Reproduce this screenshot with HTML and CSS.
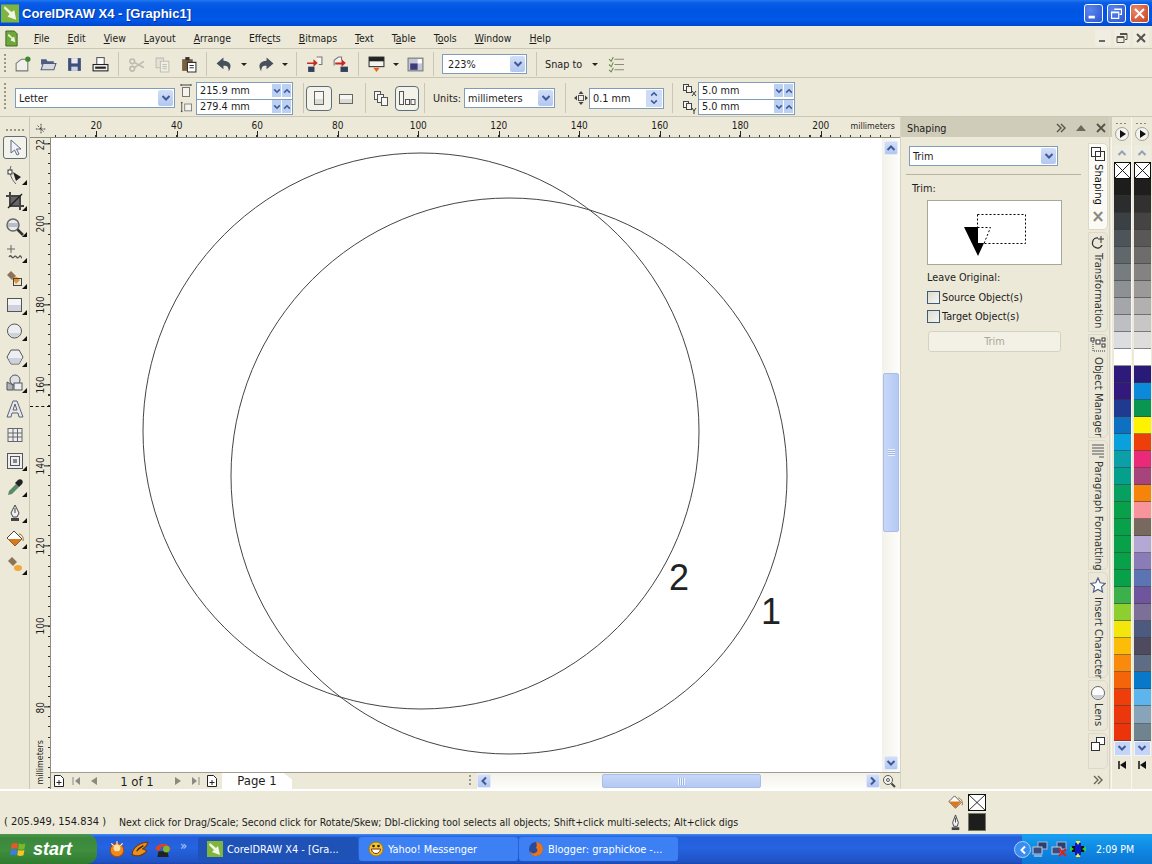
FILE: index.html
```html
<!DOCTYPE html>
<html lang="en">
<head>
    <meta charset="utf-8">
    <title>CorelDRAW X4 - [Graphic1]</title>
    <link rel="stylesheet" href="styles.css">
</head>
<body>
    <svg class="defs" width="0" height="0">
        <symbol id="chev-d" viewBox="0 0 10 10"><path d="M1.5 3 5 6.5 8.5 3" fill="none" stroke="#3d5a96" stroke-width="2"/></symbol>
        <symbol id="chev-u" viewBox="0 0 10 10"><path d="M1.5 7 5 3.5 8.5 7" fill="none" stroke="#3d5a96" stroke-width="2"/></symbol>
        <symbol id="chev-l" viewBox="0 0 10 10"><path d="M7 1.5 3.5 5 7 8.5" fill="none" stroke="#3d5a96" stroke-width="2"/></symbol>
        <symbol id="chev-r" viewBox="0 0 10 10"><path d="M3 1.5 6.5 5 3 8.5" fill="none" stroke="#3d5a96" stroke-width="2"/></symbol>
        <symbol id="add-page" viewBox="0 0 12 14"><path d="M1.5 1.5h6l3 3v8h-9z" fill="#fff" stroke="#222"/><path d="M6 6v5M3.5 8.500h5" stroke="#222"/></symbol>
    </svg>

    <header class="titlebar">
        <svg class="title-logo" viewBox="0 0 20 20"><rect width="19" height="19" y="1" fill="#7fb53c"/><path d="M4 3 11 9l3-2 2 10-9-3 2-3-6-6z" fill="#f3f6e6"/></svg>
        <span class="title-text">CorelDRAW X4 - [Graphic1]</span>
        <div class="win-buttons">
            <button class="win-btn"><svg viewBox="0 0 19 19"><rect x="4" y="12" width="7" height="3" fill="#fff"/></svg></button>
            <button class="win-btn"><svg viewBox="0 0 19 19"><path d="M7 4.500h8v6h-2M4 8h8v7H4z M4 8.500h8M7 5h8" fill="none" stroke="#fff" stroke-width="1.300"/></svg></button>
            <button class="win-btn win-close"><svg viewBox="0 0 19 19"><path d="M4.500 4.500l10 10M14.500 4.500l-10 10" stroke="#fff" stroke-width="2.200"/></svg></button>
        </div>
    </header>

    <nav class="menubar">
        <svg class="menu-logo" viewBox="0 0 16 18"><path d="M2 1h9l3 3v13H2z" fill="#6fa83a" stroke="#3d6a1f"/><path d="M5 4l4 4 2-1 1 6-5-2 1-2-4-3z" fill="#eef3dc"/></svg>
        <span class="menu-item"><u>F</u>ile</span>
        <span class="menu-item"><u>E</u>dit</span>
        <span class="menu-item"><u>V</u>iew</span>
        <span class="menu-item"><u>L</u>ayout</span>
        <span class="menu-item"><u>A</u>rrange</span>
        <span class="menu-item">Effe<u>c</u>ts</span>
        <span class="menu-item"><u>B</u>itmaps</span>
        <span class="menu-item"><u>T</u>ext</span>
        <span class="menu-item">T<u>a</u>ble</span>
        <span class="menu-item">T<u>o</u>ols</span>
        <span class="menu-item"><u>W</u>indow</span>
        <span class="menu-item"><u>H</u>elp</span>
        <div class="mdi-buttons">
            <svg viewBox="0 0 16 16"><rect x="4" y="10" width="6" height="2" fill="#6b6a60"/></svg>
            <svg viewBox="0 0 16 16"><path d="M6 3.500h7v6h-2M3 6.500h7v6H3zM3 7.500h7M6 4.500h7" fill="none" stroke="#55544a"/></svg>
            <svg viewBox="0 0 16 16"><path d="M4 4l8 8M12 4l-8 8" stroke="#55544a" stroke-width="2"/></svg>
        </div>
    </nav>

    <div class="toolbar">
        <span class="grip"></span>
        <button class="tb-btn"><svg viewBox="0 0 16 16"><path d="M2 7l5-4h6v11H2z" fill="#f1f0ea" stroke="#777"/><circle cx="13" cy="3" r="2.500" fill="#3b8a2c"/></svg></button>
        <button class="tb-btn"><svg viewBox="0 0 16 16"><path d="M1 3h5l1 2h6v3H1z" fill="#4c5f80"/><path d="M1 13 3 7h12l-2 6z" fill="#d9dbe0" stroke="#4c5f80"/></svg></button>
        <button class="tb-btn"><svg viewBox="0 0 16 16"><path d="M2 2h12v12H2z" fill="#3d4f7c"/><rect x="5" y="2" width="6" height="5" fill="#e8e8ee"/><rect x="5" y="10" width="6" height="4" fill="#cfd3e0"/></svg></button>
        <button class="tb-btn"><svg viewBox="0 0 16 16"><rect x="4.500" y="1.500" width="7" height="7" fill="#fff" stroke="#555"/><rect x="1" y="8" width="14" height="6" fill="#efeee8" stroke="#222"/><rect x="3" y="10" width="10" height="2" fill="#222"/></svg></button>
        <span class="sep"></span>
        <button class="tb-btn"><svg viewBox="0 0 16 16"><circle cx="4" cy="12" r="2.200" fill="none" stroke="#bdbbaf" stroke-width="1.500"/><circle cx="4" cy="5" r="2.200" fill="none" stroke="#bdbbaf" stroke-width="1.500"/><path d="M6 6l9 5M6 11l9-6" stroke="#bdbbaf" stroke-width="1.500"/></svg></button>
        <button class="tb-btn"><svg viewBox="0 0 16 16"><path d="M2 2h7v9H2z" fill="#e4e2d6" stroke="#c2c0b4"/><path d="M6 5h8v10H6z" fill="#efeee6" stroke="#c2c0b4"/><path d="M8 8h4M8 10h4M8 12h4" stroke="#c2c0b4"/></svg></button>
        <button class="tb-btn"><svg viewBox="0 0 16 16"><path d="M2 3h10v11H2z" fill="#7a5f3f"/><rect x="5" y="1" width="4" height="3" fill="#333"/><path d="M7 6h8v9H7z" fill="#fff" stroke="#333"/><path d="M9 9h4M9 11h4" stroke="#333"/></svg></button>
        <span class="sep"></span>
        <button class="tb-btn"><svg viewBox="0 0 16 16"><path d="M7 1.500 0.500 7 7 12.500V9.200c3.500-.5 5 1 5 5.300 3.500-5.500 1.500-9.800-5-10z" fill="#47515e"/></svg></button>
        <button class="tb-drop"></button>
        <button class="tb-btn"><svg viewBox="0 0 16 16"><path d="M9 1.500 15.500 7 9 12.500V9.200c-3.500-.5-5 1-5 5.300C.5 9 2.500 4.700 9 4.500z" fill="#47515e"/></svg></button>
        <button class="tb-drop"></button>
        <span class="sep"></span>
        <button class="tb-btn"><svg viewBox="0 0 16 16"><path d="M10 1h5v7h-3" fill="#f4f3ee" stroke="#777"/><path d="M3 8h6V5l4 3.500L9 12V9.500H3z" fill="#c8281e" transform="translate(-2 -2)"/><rect x="2" y="10" width="6" height="5" fill="#33405c"/></svg></button>
        <button class="tb-btn"><svg viewBox="0 0 16 16"><path d="M2 9V4l4-3h3v3" fill="#f4f3ee" stroke="#777"/><path d="M3 6h6V3l4 3.500L9 10V8H3z" fill="#c8281e"/><rect x="8" y="10" width="7" height="5" fill="#33405c"/></svg></button>
        <span class="sep"></span>
        <button class="tb-btn"><svg viewBox="0 0 16 16"><rect x="1" y="1" width="14" height="9" fill="#f4f3ee" stroke="#333"/><rect x="1" y="1" width="14" height="4" fill="#222"/><path d="M5 11h6l-3 4z" fill="#e8641c"/></svg></button>
        <button class="tb-drop"></button>
        <button class="tb-btn tb-launch"><svg viewBox="0 0 16 16"><rect x="1" y="2" width="14" height="12" fill="#c3c6d6" stroke="#777"/><rect x="3" y="7" width="7" height="6" fill="#3d3d7c"/><rect x="10" y="3" width="4" height="4" fill="#fff"/></svg></button>
        <span class="sep"></span>
        <div class="combo combo-zoom"><span class="combo-value">223%</span><span class="drop"><svg><use href="#chev-d"/></svg></span></div>
        <span class="sep sep-wide"></span>
        <span class="label label-snap">Snap to</span>
        <button class="tb-drop tb-drop-snap"></button>
        <button class="tb-btn tb-options"><svg viewBox="0 0 16 16"><path d="M6 3h9M6 8h9M6 13h9" stroke="#8a8c74"/><path d="M1 3l2 2 2-4M1 8l2 2 2-4M1 13l2 2 2-4" fill="none" stroke="#6d8a50"/></svg></button>
    </div>

    <div class="propbar">
        <span class="grip"></span>
        <div class="combo combo-page"><span class="combo-value">Letter</span><span class="drop"><svg><use href="#chev-d"/></svg></span></div>
        <div class="size-icons">
            <svg viewBox="0 0 12 14"><path d="M1 1v2M11 1v2M1 2h10" stroke="#444"/><rect x="2.500" y="4.500" width="7" height="9" fill="#f4f3ee" stroke="#777"/></svg>
            <svg viewBox="0 0 14 14"><path d="M2 1v12M1 2h2M1 12h2" stroke="#444"/><rect x="5.500" y="3.500" width="8" height="8" fill="#f4f3ee" stroke="#777"/></svg>
        </div>
        <div class="spin-pair spin-size">
            <div class="spin-row"><span class="spin-value">215.9 mm</span><span class="spin-btn"><svg><use href="#chev-d"/></svg></span><span class="spin-btn"><svg><use href="#chev-u"/></svg></span></div>
            <div class="spin-row"><span class="spin-value">279.4 mm</span><span class="spin-btn"><svg><use href="#chev-d"/></svg></span><span class="spin-btn"><svg><use href="#chev-u"/></svg></span></div>
        </div>
        <span class="sep sep-tall"></span>
        <button class="pb-btn pb-on"><svg viewBox="0 0 18 18"><rect x="4.500" y="2.500" width="9" height="13" fill="#f6f6f2" stroke="#666"/><rect x="5" y="10" width="8" height="5" fill="#dcdcd6"/></svg></button>
        <button class="pb-btn"><svg viewBox="0 0 18 18"><rect x="2.500" y="5.500" width="13" height="9" fill="#f6f6f2" stroke="#666"/><rect x="3" y="10" width="12" height="4" fill="#dcdcd6"/></svg></button>
        <span class="sep sep-tall"></span>
        <button class="pb-btn"><svg viewBox="0 0 18 18"><rect x="2.500" y="2.500" width="6" height="8" fill="#f6f6f2" stroke="#555"/><rect x="5.500" y="5.500" width="6" height="8" fill="#f6f6f2" stroke="#555"/><rect x="9.500" y="8.500" width="6" height="8" fill="#f6f6f2" stroke="#555"/></svg></button>
        <button class="pb-btn pb-on pb-tight"><svg viewBox="0 0 18 18"><rect x="1.500" y="2.500" width="4" height="13" fill="#f6f6f2" stroke="#555"/><rect x="7.500" y="10.500" width="4" height="5" fill="#f6f6f2" stroke="#555"/><rect x="13" y="10.500" width="4" height="5" fill="#f6f6f2" stroke="#555"/></svg></button>
        <span class="sep sep-tall"></span>
        <span class="label label-units">Units:</span>
        <div class="combo combo-units"><span class="combo-value">millimeters</span><span class="drop"><svg><use href="#chev-d"/></svg></span></div>
        <span class="sep sep-tall"></span>
        <svg class="nudge-icon" viewBox="0 0 14 14"><rect x="4.500" y="4.500" width="5" height="5" fill="#eee" stroke="#555"/><path d="M7 0l2.500 3h-5zM7 14l2.500-3h-5zM0 7l3-2.500v5zM14 7l-3-2.500v5z" fill="#444"/></svg>
        <div class="spin-single"><span class="spin-value">0.1 mm</span><span class="spin-stack"><svg><use href="#chev-u"/></svg><svg><use href="#chev-d"/></svg></span></div>
        <span class="sep sep-tall"></span>
        <div class="size-icons size-icons-dup">
            <svg viewBox="0 0 16 14"><rect x="1.500" y="1.500" width="5" height="6" fill="#f4f3ee" stroke="#444"/><rect x="4.500" y="3.500" width="5" height="6" fill="#f4f3ee" stroke="#444"/><path d="M10 8l4 5M14 8l-4 5" stroke="#333"/></svg>
            <svg viewBox="0 0 16 14"><rect x="1.500" y="1.500" width="5" height="6" fill="#f4f3ee" stroke="#444"/><rect x="4.500" y="3.500" width="5" height="6" fill="#f4f3ee" stroke="#444"/><path d="M10 8l2 3 2-3M12 11v3" fill="none" stroke="#333"/></svg>
        </div>
        <div class="spin-pair spin-dup">
            <div class="spin-row"><span class="spin-value">5.0 mm</span><span class="spin-btn"><svg><use href="#chev-d"/></svg></span><span class="spin-btn"><svg><use href="#chev-u"/></svg></span></div>
            <div class="spin-row"><span class="spin-value">5.0 mm</span><span class="spin-btn"><svg><use href="#chev-d"/></svg></span><span class="spin-btn"><svg><use href="#chev-u"/></svg></span></div>
        </div>
    </div>

    <main class="workspace">
        <aside class="toolbox">
            <span class="grip-h"></span>
            <button class="tool tool-on"><svg viewBox="0 0 20 20"><path d="M6 2v13l3.500-3 2.500 5 2-1-2.500-5H16z" fill="#f2f3f7" stroke="#5a6a8c"/></svg></button>
            <button class="tool more"><svg viewBox="0 0 20 20"><path d="M6 1c-2 5-1 12 5 18" fill="none" stroke="#666"/><rect x="3" y="5" width="4" height="4" fill="#fff" stroke="#333"/><path d="M8 7l8 5-5 4z" fill="#222"/></svg></button>
            <button class="tool more"><svg viewBox="0 0 20 20"><path d="M5 1v14h14M1 5h14v14" fill="none" stroke="#444" stroke-width="2"/><rect x="6" y="6" width="8" height="8" fill="#666"/><path d="M3 17 17 3" stroke="#222" stroke-width="1.500"/></svg></button>
            <button class="tool more"><svg viewBox="0 0 20 20"><circle cx="8" cy="8" r="6" fill="#e9ebf0" stroke="#666" stroke-width="1.500"/><path d="M3 8h10" stroke="#b8bcc6" stroke-width="4"/><path d="M12.500 12.500 18 18" stroke="#333" stroke-width="2.500"/></svg></button>
            <button class="tool more"><svg viewBox="0 0 20 20"><path d="M6 2v8M2 6h8" stroke="#666"/><path d="M4 14c2-4 3 3 5 0s3 3 5 0 2 1 3 1" fill="none" stroke="#555" stroke-width="1.300"/></svg></button>
            <button class="tool more"><svg viewBox="0 0 20 20"><path d="M2 6l4-4 5 5-4 4z" fill="#8a7356"/><path d="M7 9l5-1 3 3-4 4z" fill="#e8912c"/><rect x="8.500" y="9.500" width="8" height="7" fill="none" stroke="#444"/></svg></button>
            <button class="tool more"><svg viewBox="0 0 20 20"><rect x="2.500" y="3.500" width="14" height="13" fill="#f4f4f6" stroke="#555"/><rect x="3" y="10" width="13" height="6" fill="#cfd2dc"/></svg></button>
            <button class="tool more"><svg viewBox="0 0 20 20"><circle cx="9.500" cy="10" r="7" fill="#eceef2" stroke="#555"/><path d="M3.500 12a6.500 6.500 0 0 0 12 0z" fill="#cfd2dc"/></svg></button>
            <button class="tool more"><svg viewBox="0 0 20 20"><path d="M6 3h8l4 7-4 7H6l-4-7z" fill="#eceef2" stroke="#555"/><path d="M3 11h14l-3 5.500H6z" fill="#cfd2dc"/></svg></button>
            <button class="tool more"><svg viewBox="0 0 20 20"><circle cx="10" cy="7" r="5" fill="#dfe1e8" stroke="#555"/><path d="M2 17V9l6 3v5z" fill="#aeb2bf" stroke="#555"/><rect x="9" y="10" width="8" height="7" fill="#eceef2" stroke="#555"/></svg></button>
            <button class="tool"><svg viewBox="0 0 20 20"><path d="M8 2h4l6 16h-4l-1-4H7l-1 4H2zM8 11h4l-2-6z" fill="#e6e8ee" stroke="#5c6272" fill-rule="evenodd"/></svg></button>
            <button class="tool"><svg viewBox="0 0 20 20"><rect x="3" y="3.500" width="14" height="13" fill="#eceef2" stroke="#666"/><path d="M3 8h14M3 12h14M8 4v12M12.500 4v12" stroke="#666"/></svg></button>
            <button class="tool more"><svg viewBox="0 0 20 20"><rect x="2.500" y="2.500" width="15" height="15" fill="#eceef2" stroke="#555"/><rect x="5.500" y="5.500" width="9" height="9" fill="none" stroke="#555"/><rect x="8" y="8" width="4" height="4" fill="#888"/></svg></button>
            <button class="tool more"><svg viewBox="0 0 20 20"><path d="M3 18l1-4 7-7 3 3-7 7z" fill="#5a8a6a"/><path d="M10 6l3-3c1-1 3-1 4 0s1 3 0 4l-3 3z" fill="#222"/></svg></button>
            <button class="tool more"><svg viewBox="0 0 20 20"><path d="M10 2l4 8-2 4H8l-2-4z" fill="#eef0f3" stroke="#444"/><path d="M10 5v5" stroke="#444"/><rect x="6" y="15" width="8" height="3" fill="#444"/></svg></button>
            <button class="tool more"><svg viewBox="0 0 20 20"><path d="M9 2l8 8-7 7-8-8z" fill="#fff" stroke="#444"/><path d="M3 10h14l-7 7z" fill="#d8791c"/><path d="M14 5c3 0 5 4 4 7" fill="none" stroke="#9a6a30"/></svg></button>
            <button class="tool more"><svg viewBox="0 0 20 20"><path d="M3 6l4-4 5 5-4 4z" fill="#8a7356"/><ellipse cx="13" cy="13" rx="4" ry="3" fill="#f0a83c"/></svg></button>
        </aside>

        <section class="drawing">
            <div class="ruler-row">
                <div class="ruler-corner"><svg viewBox="0 0 14 14"><path d="M7 1v12M1 7h12" stroke="#222" stroke-dasharray="2 1"/><path d="M3 3l8 8" stroke="#222" stroke-dasharray="2 2"/></svg></div>
                <div class="ruler-h">
                    <span class="mark">20</span><span class="mark">40</span><span class="mark">60</span><span class="mark">80</span><span class="mark">100</span><span class="mark">120</span><span class="mark">140</span><span class="mark">160</span><span class="mark">180</span><span class="mark">200</span>
                    <span class="ruler-unit">millimeters</span>
                </div>
            </div>
            <div class="drawing-body">
                <div class="ruler-v">
                    <span class="mark-v mark-first">22</span><span class="mark-v">200</span><span class="mark-v">180</span><span class="mark-v">160</span><span class="mark-v">140</span><span class="mark-v">120</span><span class="mark-v">100</span><span class="mark-v">80</span>
                    <span class="ruler-unit-v">millimeters</span>
                    <span class="cursor-v"></span>
                </div>
                <div class="drawing-main">
                    <div class="canvas-row">
                        <div class="canvas">
                            <svg class="art" viewBox="0 0 831 633">
                                <circle cx="370" cy="293" r="278" fill="none" stroke="#444"/>
                                <circle cx="458" cy="338" r="278" fill="none" stroke="#444"/>
                                <text x="628" y="452" class="art-num">2</text>
                                <text x="720" y="486" class="art-num">1</text>
                            </svg>
                        </div>
                        <div class="vscroll">
                            <span class="sb-btn"><svg><use href="#chev-u"/></svg></span>
                            <span class="vtrack"><span class="vthumb"></span></span>
                            <span class="sb-btn"><svg><use href="#chev-d"/></svg></span>
                        </div>
                    </div>
                    <div class="page-row">
                        <div class="pager">
                            <svg class="pg-add" viewBox="0 0 12 14"><use href="#add-page"/></svg>
                            <svg class="pg-nav" viewBox="0 0 10 10"><path d="M2 1v8" stroke="#8a8a80"/><path d="M9 1v8L4 5z" fill="#8a8a80"/></svg>
                            <svg class="pg-nav" viewBox="0 0 10 10"><path d="M8 1v8L2 5z" fill="#8a8a80"/></svg>
                            <span class="page-count">1 of 1</span>
                            <svg class="pg-nav" viewBox="0 0 10 10"><path d="M2 1v8l6-4z" fill="#8a8a80"/></svg>
                            <svg class="pg-nav" viewBox="0 0 10 10"><path d="M8 1v8" stroke="#8a8a80"/><path d="M1 1v8l5-4z" fill="#8a8a80"/></svg>
                            <svg class="pg-add" viewBox="0 0 12 14"><use href="#add-page"/></svg>
                            <span class="page-tab">Page 1</span>
                        </div>
                        <span class="page-fill"><span class="grip-small"></span></span>
                        <div class="hscroll">
                            <span class="sb-btn"><svg><use href="#chev-l"/></svg></span>
                            <span class="htrack"><span class="hthumb"></span></span>
                            <span class="sb-btn"><svg><use href="#chev-r"/></svg></span>
                        </div>
                        <svg class="zoom-corner" viewBox="0 0 14 14"><circle cx="6" cy="6" r="4.500" fill="#f4f4f0" stroke="#555"/><circle cx="6" cy="6" r="1.500" fill="none" stroke="#555"/><path d="M9.500 9.500 13 13" stroke="#444" stroke-width="2"/></svg>
                    </div>
                </div>
            </div>
        </section>

        <aside class="docker">
            <div class="docker-head">
                <span>Shaping</span>
                <svg viewBox="0 0 12 12" class="dh-icon"><path d="M2 2l4 4-4 4M6 2l4 4-4 4" fill="none" stroke="#55544a" stroke-width="1.400"/></svg>
                <svg viewBox="0 0 12 12" class="dh-icon"><path d="M1 9 6 3l5 6z" fill="#6a695e"/></svg>
                <svg viewBox="0 0 12 12" class="dh-icon"><path d="M2 2l8 8M10 2l-8 8" stroke="#55544a" stroke-width="1.800"/></svg>
            </div>
            <div class="combo combo-op"><span class="combo-value">Trim</span><span class="drop"><svg><use href="#chev-d"/></svg></span></div>
            <hr class="docker-rule">
            <p class="docker-title">Trim:</p>
            <div class="preview">
                <svg viewBox="0 0 133 63" width="133" height="63">
                    <rect x="49.500" y="13.500" width="48" height="29" fill="none" stroke="#000" stroke-dasharray="2 2"/>
                    <path d="M49.500 26.500h13l-6.500 16" fill="none" stroke="#000" stroke-dasharray="2 2"/>
                    <path d="M36 26h14v16h6l-6 13z" fill="#000"/>
                </svg>
            </div>
            <p class="docker-label">Leave Original:</p>
            <label class="check"><span class="box"></span>Source Object(s)</label>
            <label class="check"><span class="box"></span>Target Object(s)</label>
            <button class="apply-btn">Trim</button>
        </aside>

        <aside class="docker-tabs">
            <div class="dtab dtab-on dtab-shaping">
                <svg viewBox="0 0 16 16"><rect x="1.500" y="1.500" width="9" height="9" fill="#fff" stroke="#333"/><rect x="5.500" y="5.500" width="9" height="9" fill="none" stroke="#333"/></svg>
                <span class="dtab-text">Shaping</span>
                <span class="dtab-close">&#215;</span>
            </div>
            <div class="dtab dtab-transform">
                <svg viewBox="0 0 16 16"><path d="M8 3a5 5 0 1 0 4 7" fill="none" stroke="#333" stroke-width="1.300"/><path d="M11 1v7M8 4h6" stroke="#333"/></svg>
                <span class="dtab-text">Transformation</span>
            </div>
            <div class="dtab dtab-object">
                <svg viewBox="0 0 16 16"><rect x="1" y="1" width="3" height="3" fill="#fff" stroke="#333"/><rect x="6" y="3" width="4" height="4" fill="#fff" stroke="#333"/><rect x="12" y="1" width="3" height="3" fill="#fff" stroke="#333"/><rect x="12" y="7" width="3" height="3" fill="#fff" stroke="#333"/><path d="M3 5v9h12" fill="none" stroke="#333" stroke-dasharray="1 1"/></svg>
                <span class="dtab-text">Object Manager</span>
            </div>
            <div class="dtab dtab-para">
                <svg viewBox="0 0 16 16"><path d="M2 2h12M2 5h12M2 8h12M2 11h12M9 14h5" stroke="#555"/></svg>
                <span class="dtab-text">Paragraph Formatting</span>
            </div>
            <div class="dtab dtab-char">
                <svg viewBox="0 0 16 16"><path d="M8 1l2.200 4.800 5 .6-3.700 3.500 1 5.100L8 12.500 3.500 15l1-5.100L.8 6.400l5-.6z" fill="#fff" stroke="#4d5d86" stroke-width="1.200"/></svg>
                <span class="dtab-text">Insert Character</span>
            </div>
            <div class="dtab dtab-lens">
                <svg viewBox="0 0 16 16"><circle cx="8" cy="8" r="6.500" fill="#fff" stroke="#666"/><path d="M2.500 10a6 6 0 0 0 11 0z" fill="#cdd0d8"/></svg>
                <span class="dtab-text">Lens</span>
            </div>
            <div class="dtab dtab-clone">
                <svg viewBox="0 0 16 16"><rect x="6.500" y="1.500" width="8" height="7" fill="#fff" stroke="#333"/><rect x="1.500" y="6.500" width="8" height="8" fill="#fff" stroke="#333"/></svg>
            </div>
            <svg class="dtab-more" viewBox="0 0 12 12"><path d="M2 2l4 4-4 4M6 2l4 4-4 4" fill="none" stroke="#66655a" stroke-width="1.400"/></svg>
        </aside>

        <aside class="palettes">
            <div class="palette">
                <span class="pal-grip"></span>
                <span class="pal-play"></span>
                <span class="pal-up"><svg><use href="#chev-u"/></svg></span>
                <span class="swatch-none"><svg viewBox="0 0 16 16"><path d="M0 0l16 16M16 0 0 16" stroke="#111"/></svg></span>
                <div class="swatches">
                    <i style="background:#1d1d1b"></i><i style="background:#2a2c2e"></i><i style="background:#3b4045"></i><i style="background:#4e555a"></i><i style="background:#61686c"></i><i style="background:#777c7f"></i><i style="background:#8e9194"></i><i style="background:#a4a6a9"></i><i style="background:#bdbfc2"></i><i style="background:#dcdde0"></i><i style="background:#ffffff"></i>
                    <i style="background:#2e1a7a"></i><i style="background:#32197c"></i><i style="background:#1f3a8f"></i><i style="background:#0d70c0"></i><i style="background:#09a0dc"></i><i style="background:#0ba0a8"></i><i style="background:#05a08c"></i><i style="background:#08a060"></i><i style="background:#08a048"></i><i style="background:#08a048"></i><i style="background:#08a048"></i><i style="background:#08a048"></i><i style="background:#08a048"></i>
                    <i style="background:#3cb04a"></i><i style="background:#8ccf2e"></i><i style="background:#f2e60c"></i><i style="background:#fcbc08"></i><i style="background:#f98a0c"></i><i style="background:#f46408"></i><i style="background:#ee3e0c"></i><i style="background:#ec360c"></i><i style="background:#ec340c"></i>
                </div>
                <span class="pal-down"><svg><use href="#chev-d"/></svg></span>
                <svg class="pal-first" viewBox="0 0 10 10"><path d="M2 1v8" stroke="#111" stroke-width="1.500"/><path d="M9 1v8L3 5z" fill="#111"/></svg>
            </div>
            <div class="palette">
                <span class="pal-grip"></span>
                <span class="pal-play"></span>
                <span class="pal-up"><svg><use href="#chev-u"/></svg></span>
                <span class="swatch-none"><svg viewBox="0 0 16 16"><path d="M0 0l16 16M16 0 0 16" stroke="#111"/></svg></span>
                <div class="swatches">
                    <i style="background:#201e1c"></i><i style="background:#333130"></i><i style="background:#464442"></i><i style="background:#5a5856"></i><i style="background:#6f6d6b"></i><i style="background:#858381"></i><i style="background:#9b9a98"></i><i style="background:#b2b1af"></i><i style="background:#c8c7c5"></i><i style="background:#dedddb"></i><i style="background:#ffffff"></i>
                    <i style="background:#2a1a78"></i><i style="background:#0a8ad8"></i><i style="background:#0a9650"></i><i style="background:#fdf200"></i><i style="background:#ee3e0c"></i><i style="background:#ea2a78"></i><i style="background:#a8447c"></i><i style="background:#f6830a"></i><i style="background:#fa949c"></i><i style="background:#78695e"></i><i style="background:#b4a8d4"></i><i style="background:#8a7cb8"></i><i style="background:#5c74b4"></i>
                    <i style="background:#70559e"></i><i style="background:#7c7098"></i><i style="background:#4c5a80"></i><i style="background:#4e4a60"></i><i style="background:#5e6c84"></i><i style="background:#0878c8"></i><i style="background:#5eb4ec"></i><i style="background:#88a4b8"></i><i style="background:#708490"></i>
                </div>
                <span class="pal-down"><svg><use href="#chev-d"/></svg></span>
                <svg class="pal-first" viewBox="0 0 10 10"><path d="M2 1v8" stroke="#111" stroke-width="1.500"/><path d="M9 1v8L3 5z" fill="#111"/></svg>
            </div>
        </aside>
    </main>

    <footer class="statusbar">
        <span class="coords">( 205.949, 154.834 )</span>
        <span class="hint">Next click for Drag/Scale; Second click for Rotate/Skew; Dbl-clicking tool selects all objects; Shift+click multi-selects; Alt+click digs</span>
        <div class="status-swatches">
            <div class="status-line">
                <svg viewBox="0 0 18 18"><path d="M8 2l7 7-6 6-7-7z" fill="#fff" stroke="#555"/><path d="M2 8h13l-6 7z" fill="#d8791c"/><path d="M12 4c3 1 5 4 4 8" fill="none" stroke="#9a6a30"/></svg>
                <span class="fill-none"><svg viewBox="0 0 18 17"><path d="M0 0l18 17M18 0 0 17" stroke="#111"/></svg></span>
            </div>
            <div class="status-line">
                <svg viewBox="0 0 18 18"><path d="M9 1l3 8-1 4H7L6 9z" fill="#f0f1f4" stroke="#444"/><path d="M9 4v5" stroke="#444"/><rect x="5" y="14" width="8" height="3" fill="#444"/></svg>
                <span class="fill-black"></span>
            </div>
        </div>
    </footer>

    <div class="taskbar">
        <button class="start-btn">
            <svg viewBox="0 0 20 20"><path d="M2 4c3-1 4-1 7 0l-1 6c-3-1-4-1-7 0z" fill="#e8562a"/><path d="M10 4c3 1 4 1 7 0l-1 6c-3 1-4 1-7 0z" fill="#7ab929"/><path d="M1 11c3-1 4-1 7 0l-1 6c-3-1-4-1-7 0z" fill="#3b7de0"/><path d="M9 11c3 1 4 1 7 0l-1 6c-3 1-4 1-7 0z" fill="#f6c528"/></svg>
            <span>start</span>
        </button>
        <div class="quick">
            <svg viewBox="0 0 16 16"><circle cx="8" cy="9" r="6" fill="#f08a1c" stroke="#a84a08"/><circle cx="8" cy="7" r="3" fill="#ffe2a8"/><path d="M8 1v3M3 3l2 2M13 3l-2 2" stroke="#fff"/></svg>
            <svg viewBox="0 0 16 16"><path d="M1 13c0-6 7-11 14-11-1 4-3 5-5 6 2 0 3 1 4 2-4 4-9 5-13 3z" fill="#e8921c" stroke="#7a3a08"/><path d="M5 10c2-3 4-4 6-5" stroke="#3a2408"/></svg>
            <svg viewBox="0 0 16 16"><path d="M1 8c2-6 12-6 14 0l-3 2-2-2V6H6v2l-2 2z" fill="#e0421c"/><path d="M4 10h8l1 5H3z" fill="#222"/><circle cx="11" cy="8" r="3" fill="#7fb82c"/></svg>
            <span class="quick-more">&#187;</span>
        </div>
        <div class="task task-on">
            <svg viewBox="0 0 16 16"><rect width="16" height="16" fill="#7fb53c"/><path d="M3 2l6 5 2-2 2 9-8-3 2-2-5-5z" fill="#f3f6e6"/></svg>
            <span>CorelDRAW X4 - [Gra...</span>
        </div>
        <div class="task">
            <svg viewBox="0 0 16 16"><circle cx="8" cy="8" r="7" fill="#f6c528" stroke="#a87808"/><path d="M3.500 8h9c0 6-9 6-9 0z" fill="#fff" stroke="#7a2a08"/><circle cx="5.500" cy="5" r="1.300" fill="#222"/><circle cx="10.500" cy="5" r="1.300" fill="#222"/></svg>
            <span>Yahoo! Messenger</span>
        </div>
        <div class="task">
            <svg viewBox="0 0 16 16"><circle cx="8" cy="8" r="7" fill="#2a4a9c"/><path d="M8 1c4 0 7 3 7 7s-3 7-7 7c-3 0-6-2-6-5 1 2 3 3 5 2 3-1 3-4 1-5 1-2 1-4 0-6z" fill="#e8741c"/></svg>
            <span>Blogger: graphickoe -...</span>
        </div>
        <div class="tray">
            <span class="tray-chev"><svg viewBox="0 0 10 10"><path d="M7 1.500 3.500 5 7 8.500" fill="none" stroke="#fff" stroke-width="2"/></svg></span>
            <svg viewBox="0 0 16 16"><rect x="6" y="1" width="9" height="7" fill="#2c3e6e" stroke="#a8b8d8"/><rect x="1" y="6" width="9" height="7" fill="#3a4c80" stroke="#c4cee0"/><path d="M2 15h8" stroke="#dfe4ee"/></svg>
            <svg viewBox="0 0 16 16"><rect x="6" y="1" width="9" height="7" fill="#2c3e6e" stroke="#a8b8d8"/><rect x="1" y="6" width="9" height="7" fill="#3a4c80" stroke="#c4cee0"/><path d="M8 8l7 7M15 8l-7 7" stroke="#e02018" stroke-width="2"/></svg>
            <svg viewBox="0 0 16 16"><path d="M2 5h12v6H2z" fill="#111"/><path d="M5 2h6v12H5z" fill="#0818c8"/><path d="M5.500 0h5L8 4z M5.500 16h5L8 12z" fill="#f6f020"/><path d="M0 5.500v5L4 8z M16 5.500v5L12 8z" fill="#30d030"/></svg>
            <span class="clock">2:09 PM</span>
        </div>
    </div>
</body>
</html>
```

FILE: styles.css
```css
* {
    box-sizing: border-box;
}
html, body {
    margin: 0;
    padding: 0;
}
body {
    width: 1152px;
    height: 864px;
    overflow: hidden;
    display: flex;
    flex-direction: column;
    background: #ece9d8;
    color: #1c1c1c;
    font-family: "DejaVu Sans Condensed", "DejaVu Sans", sans-serif;
    font-stretch: condensed;
    font-size: 10.800px;
}
button {
    border: none;
    background: none;
    padding: 0;
    font: inherit;
    color: inherit;
}
svg {
    display: block;
}
.defs {
    position: absolute;
}

/* title bar */
.titlebar {
    height: 26px;
    flex: none;
    display: flex;
    align-items: center;
    padding-left: 1px;
    background: linear-gradient(#1f78f0 0, #0a5ce6 3px, #0055e2 10px, #0058e8 20px, #0048cc 26px);
    color: #fff;
}
.title-logo {
    width: 19px;
    height: 20px;
    margin-right: 2px;
}
.title-text {
    font-family: "Liberation Sans", Arial, sans-serif;
    font-stretch: normal;
    font-size: 13px;
    font-weight: bold;
    text-shadow: 1px 1px 0 #0a2f9c;
}
.win-buttons {
    margin-left: auto;
    display: flex;
    gap: 4px;
    padding-right: 3px;
}
.win-btn {
    width: 19px;
    height: 19px;
    border: 1px solid #fff;
    border-radius: 3px;
    background: radial-gradient(circle at 30% 30%, #5a86ee, #2a55d0);
}
.win-close {
    background: radial-gradient(circle at 30% 30%, #e88a6c, #c8401c);
}

/* menu */
.menubar {
    height: 23px;
    flex: none;
    display: flex;
    align-items: center;
    gap: 18px;
    padding: 2px 0 0 4px;
    border-bottom: 1px solid #c9c6b4;
    font-size: 10.400px;
}
.menu-logo {
    width: 15px;
    height: 17px;
    margin-right: -3px;
}
.mdi-buttons {
    margin-left: auto;
    display: flex;
    gap: 3px;
    padding-right: 3px;
}
.mdi-buttons svg {
    width: 16px;
    height: 16px;
    background: #f0eee2;
}

/* toolbars */
.toolbar {
    height: 29px;
    flex: none;
    display: flex;
    align-items: center;
    padding: 2px 0 0 9px;
    border-bottom: 1px solid #c9c6b4;
    position: relative;
}
.propbar {
    height: 39px;
    flex: none;
    display: flex;
    align-items: center;
    padding: 2px 0 0 15px;
    border-bottom: 1px solid #c9c6b4;
    position: relative;
}
.grip {
    position: absolute;
    left: 4px;
    top: 5px;
    bottom: 5px;
    width: 2px;
    background: repeating-linear-gradient(#9a9884 0 2px, transparent 2px 4px);
}
.tb-btn {
    width: 26px;
    height: 24px;
    flex: none;
    display: flex;
    align-items: center;
    justify-content: center;
}
.tb-btn svg {
    width: 17px;
    height: 17px;
}
.tb-drop {
    width: 14px;
    height: 24px;
    flex: none;
    display: flex;
    align-items: center;
    justify-content: center;
}
.tb-drop::after {
    content: "";
    border-left: 3px solid transparent;
    border-right: 3px solid transparent;
    border-top: 3px solid #222;
}
.tb-drop + .tb-btn {
    margin-left: 1px;
}
.tb-drop + .tb-launch {
    margin-left: -1px;
}
.tb-drop + .sep {
    margin-left: 4px;
}
.sep {
    width: 1px;
    height: 24px;
    flex: none;
    margin: 0 4px;
    background: #c9c6b4;
}
.tb-btn + .sep {
    margin-left: 5px;
}
.sep-wide {
    margin: 0 8px 0 9px;
}
.sep-tall {
    height: 30px;
    margin-right: 2px;
}
.label {
    white-space: nowrap;
}
.label-snap {
    width: 38px;
}
.tb-drop-snap {
    margin-left: 5px;
}
.tb-options {
    margin-left: 1px;
}

/* combo boxes */
.combo {
    height: 20px;
    flex: none;
    display: flex;
    align-items: center;
    justify-content: space-between;
    background: #fff;
    border: 1px solid #7f9db9;
    padding: 1px;
}
.combo-value {
    padding-left: 2px;
}
.drop {
    width: 15px;
    height: 16px;
    display: flex;
    align-items: center;
    justify-content: center;
    background: linear-gradient(#d3def8, #b3c6f0);
    border-radius: 2px;
}
.drop svg {
    width: 10px;
    height: 10px;
}
.combo-zoom {
    width: 85px;
    margin-left: 4px;
}
.combo-zoom .combo-value {
    padding-left: 4px;
}
.combo-page {
    width: 160px;
}
.combo-units {
    width: 91px;
    margin-right: 6px;
}
.combo-op {
    width: 149px;
    margin: 9px 0 0 8px;
}

/* spinners */
.size-icons {
    width: 14px;
    display: flex;
    flex-direction: column;
    gap: 3px;
    margin: 0 2px 0 5px;
}
.size-icons svg {
    width: 12px;
    height: 14px;
}
.size-icons-dup {
    width: 16px;
    margin: 0 0 0 7px;
}
.size-icons-dup svg {
    width: 16px;
    height: 14px;
}
.spin-pair {
    flex: none;
    border: 1px solid #7f9db9;
    background: #fff;
    display: flex;
    flex-direction: column;
    height: 33px;
}
.spin-size {
    width: 97px;
    margin-right: 6px;
}
.spin-dup {
    width: 97px;
}
.spin-row {
    height: 16px;
    flex: none;
    display: flex;
    align-items: center;
    padding: 1px;
}
.spin-row + .spin-row {
    border-top: 1px solid #7f9db9;
    height: 15px;
}
.spin-value {
    flex: 1;
    padding-left: 2px;
}
.spin-btn {
    width: 9px;
    height: 13px;
    margin-left: 1px;
    background: #bcd0f4;
    display: flex;
    align-items: center;
    justify-content: center;
}
.spin-btn svg {
    width: 8px;
    height: 8px;
}
.spin-single {
    width: 75px;
    height: 21px;
    flex: none;
    display: flex;
    align-items: center;
    border: 1px solid #7f9db9;
    background: #fff;
    padding: 1px;
    margin-right: 4px;
}
.spin-stack {
    width: 16px;
    height: 17px;
    background: #cddbf6;
    display: flex;
    flex-direction: column;
    align-items: center;
}
.spin-stack svg {
    width: 8px;
    height: 8px;
}
.nudge-icon {
    width: 14px;
    height: 14px;
    margin: 0 1px 0 6px;
}

/* property bar buttons */
.pb-btn {
    width: 26px;
    height: 25px;
    flex: none;
    display: flex;
    align-items: center;
    justify-content: center;
    border: 1px solid transparent;
    margin-right: 1px;
}
.pb-btn svg {
    width: 18px;
    height: 18px;
}
.pb-on {
    border-color: #5c6d7c;
    border-radius: 4px;
    background: #f4f3ea;
}
.pb-btn + .sep {
    margin-left: 5px;
}
.pb-tight {
    width: 24px;
    margin-right: 0;
}
.label-units {
    width: 27px;
    margin: 0 4px 0 6px;
}

/* main area */
.workspace {
    height: 673px;
    flex: none;
    display: flex;
    border-bottom: 1px solid #fff;
}
.toolbox {
    width: 30px;
    flex: none;
    border-right: 1px solid #c9c6b4;
    display: flex;
    flex-direction: column;
    align-items: center;
    padding: 12px 0 0 0;
}
.grip-h {
    width: 18px;
    height: 2px;
    margin-bottom: 5px;
    background: repeating-linear-gradient(90deg, #9a9884 0 2px, transparent 2px 4px);
}
.tool {
    width: 24px;
    height: 26px;
    flex: none;
    display: flex;
    align-items: center;
    justify-content: center;
    position: relative;
}
.tool svg {
    width: 20px;
    height: 20px;
}
.tool.more::after {
    content: "";
    position: absolute;
    right: 0;
    bottom: 3px;
    border-left: 5px solid transparent;
    border-bottom: 5px solid #111;
}
.tool-on {
    height: 23px;
    margin-bottom: 3px;
    border: 1px solid #5c6d7c;
    border-radius: 3px;
    background: #f4f3ea;
}

.drawing {
    width: 870px;
    flex: none;
    display: flex;
    flex-direction: column;
}
.ruler-row {
    height: 21px;
    flex: none;
    display: flex;
    border-bottom: 1px solid #8f8d80;
}
.ruler-corner {
    width: 21px;
    flex: none;
    display: flex;
    align-items: flex-end;
    justify-content: center;
    padding-bottom: 2px;
}
.ruler-corner svg {
    width: 12px;
    height: 12px;
}
.ruler-h {
    flex: 1;
    display: flex;
    padding-left: 5px;
    font-size: 10px;
    background: repeating-linear-gradient(90deg, #333 0 1px, transparent 1px 10.060px) 4px 100% / 100% 2px no-repeat;
    position: relative;
}
.mark {
    width: 80.500px;
    flex: none;
    text-align: center;
    position: relative;
    padding-top: 3px;
}
.mark::after {
    content: "";
    position: absolute;
    left: 50%;
    bottom: 0;
    width: 1px;
    height: 6px;
    background: #222;
}
.ruler-unit {
    position: absolute;
    right: 5px;
    top: 4px;
    padding-left: 4px;
    font-size: 8.800px;
    background: #ece9d8;
}
.drawing-body {
    flex: 1;
    min-height: 0;
    display: flex;
}
.drawing-main {
    flex: 1;
    min-width: 0;
    display: flex;
    flex-direction: column;
}
.canvas-row {
    flex: 1;
    min-height: 0;
    display: flex;
}
.ruler-v {
    width: 21px;
    flex: none;
    border-right: 1px solid #8f8d80;
    display: flex;
    flex-direction: column;
    align-items: stretch;
    font-size: 10px;
    background: repeating-linear-gradient(#333 0 1px, transparent 1px 10.060px) 100% 5px / 2px 100% no-repeat;
    position: relative;
    overflow: hidden;
}
.mark-v {
    height: 80.400px;
    flex: none;
    writing-mode: vertical-rl;
    transform: rotate(180deg);
    text-align: center;
    padding-right: 5px;
    position: relative;
}
.mark-first {
    margin-top: -34px;
}
.mark-v::after {
    content: "";
    position: absolute;
    top: 50%;
    left: 0;
    height: 1px;
    width: 6px;
    background: #222;
}
.ruler-unit-v {
    position: absolute;
    bottom: 3px;
    left: 5px;
    padding: 2px 0;
    writing-mode: vertical-rl;
    transform: rotate(180deg);
    font-size: 8.800px;
    background: #ece9d8;
}
.cursor-v {
    position: absolute;
    left: 0;
    right: 0;
    top: 268px;
    border-top: 1px dashed #111;
}
.canvas {
    width: 831px;
    flex: none;
    background: #fff;
}
.art {
    width: 831px;
    height: 633px;
}
.art-num {
    font-family: "Liberation Sans", Arial, sans-serif;
    font-size: 36px;
    text-anchor: middle;
    fill: #222;
}
.vscroll {
    width: 18px;
    flex: none;
    display: flex;
    flex-direction: column;
    align-items: center;
    padding: 3px 0 2px;
    background: linear-gradient(90deg, #f3f2ea, #fdfdfb);
}
.vtrack {
    flex: 1;
    width: 100%;
    padding: 218px 1px 224px;
    display: flex;
}
.vthumb {
    flex: 1;
    display: flex;
    align-items: center;
    justify-content: center;
    background: linear-gradient(90deg, #c7d7f8, #b4c9f3);
    border: 1px solid #a9bee6;
    border-radius: 2px;
}
.vthumb::after {
    content: "";
    width: 7px;
    height: 7px;
    background: repeating-linear-gradient(#eef3fd 0 1px, #9fb6e4 1px 2px);
}
.sb-btn {
    width: 14px;
    height: 14px;
    flex: none;
    display: flex;
    align-items: center;
    justify-content: center;
    background: linear-gradient(#d3def8, #b3c6f0);
    border-radius: 2px;
    border: 1px solid #e3eafb;
}
.sb-btn svg {
    width: 10px;
    height: 10px;
}
.page-row {
    height: 17px;
    flex: none;
    display: flex;
    align-items: center;
    border-top: 1px solid #a09e90;
}
.pager {
    display: flex;
    align-items: center;
    flex: none;
    width: 241px;
    padding-left: 2px;
}
.pg-add {
    width: 12px;
    height: 14px;
    flex: none;
}
.pg-nav {
    width: 10px;
    height: 10px;
    margin-left: 6px;
    flex: none;
}
.pager .pg-nav + .pg-nav {
    margin-left: 8px;
}
.page-count {
    width: 79px;
    text-align: center;
    font-size: 13px;
}
.page-count + .pg-nav {
    margin-left: -2px;
}
.pg-nav + .pg-add {
    margin-left: 5px;
}
.page-tab {
    margin-left: 4px;
    width: 70px;
    height: 16px;
    background: #fff;
    text-align: center;
    font-size: 13px;
    line-height: 15px;
    flex: none;
    clip-path: polygon(0 0, 88% 0, 100% 40%, 100% 100%, 0 100%);
}
.page-fill {
    flex: none;
    width: 185px;
    height: 16px;
    display: flex;
    justify-content: flex-end;
    padding-right: 6px;
}
.grip-small {
    width: 2px;
    height: 12px;
    margin-top: 2px;
    background: repeating-linear-gradient(#9a9884 0 2px, transparent 2px 4px);
}
.hscroll {
    width: 403px;
    height: 16px;
    flex: none;
    display: flex;
    align-items: center;
    background: linear-gradient(#f3f2ea, #fdfdfb);
}
.htrack {
    flex: 1;
    height: 14px;
    padding-left: 111px;
    padding-right: 105px;
    display: flex;
}
.hthumb {
    flex: 1;
    display: flex;
    align-items: center;
    justify-content: center;
    background: linear-gradient(#c7d7f8, #b4c9f3);
    border: 1px solid #a9bee6;
    border-radius: 2px;
}
.hthumb::after {
    content: "";
    width: 7px;
    height: 7px;
    background: repeating-linear-gradient(90deg, #eef3fd 0 1px, #9fb6e4 1px 2px);
}
.zoom-corner {
    width: 14px;
    height: 14px;
    margin-left: 2px;
}

/* docker */
.docker {
    width: 185px;
    flex: none;
    border-left: 1px solid #d6d3c2;
}
.docker-head {
    width: 211px;
    height: 20px;
    display: flex;
    align-items: center;
    padding: 2px 5px 0 6px;
    background: #cfccb9;
    gap: 8px;
    position: relative;
}
.docker-head span {
    flex: 1;
}
.dh-icon {
    width: 12px;
    height: 12px;
}
.docker-rule {
    margin: 8px 4px 0 5px;
    border: none;
    border-top: 1px solid #b5b3a2;
}
.docker-title {
    margin: 7px 0 0 11px;
}
.preview {
    width: 135px;
    height: 65px;
    margin: 5px 0 0 26px;
    border: 1px solid #a9a798;
    background: #fff;
}
.docker-label {
    margin: 6px 0 0 26px;
}
.check {
    display: flex;
    align-items: center;
    gap: 2px;
    height: 19px;
    margin-left: 26px;
}
.docker-label + .check {
    margin-top: 4px;
}
.box {
    width: 13px;
    height: 13px;
    border: 1px solid #3d5a76;
    background: linear-gradient(135deg, #dcdcd2, #f6f6f0);
}
.apply-btn {
    display: block;
    width: 133px;
    height: 21px;
    margin: 5px 0 0 27px;
    border: 1px solid #d4d2c4;
    border-radius: 3px;
    background: #f3f1e6;
    color: #a8a698;
}

/* vertical tabs */
.docker-tabs {
    width: 25px;
    flex: none;
    position: relative;
    display: flex;
    flex-direction: column;
    align-items: flex-start;
    padding: 26px 0 0 3px;
    border-right: 1px solid #d6d3c2;
}
.dtab {
    width: 20px;
    flex: none;
    display: flex;
    flex-direction: column;
    align-items: center;
    gap: 2px;
    padding-top: 2px;
    margin-bottom: 2px;
    border: 1px solid #dcd9c8;
    border-radius: 0 5px 5px 0;
    background: #ebe8d9;
    color: #333;
}
.dtab svg {
    width: 16px;
    height: 16px;
    flex: none;
}
.dtab-text {
    writing-mode: vertical-rl;
    white-space: nowrap;
    font-size: 11.200px;
}
.dtab-on {
    background: #fbfaf5;
    color: #111;
}
.dtab-close {
    font-size: 18px;
    line-height: 18px;
    color: #8a897e;
    font-weight: bold;
}
.dtab-shaping { height: 87px; }
.dtab-transform { height: 100px; }
.dtab-object { height: 104px; gap: 4px; }
.dtab-para { height: 130px; }
.dtab-char { height: 106px; padding-top: 4px; gap: 4px; }
.dtab-lens { height: 51px; padding-top: 4px; }
.dtab-clone { height: 36px; }
.dtab-more {
    position: absolute;
    bottom: 3px;
    left: 7px;
    width: 12px;
    height: 12px;
}

/* palettes */
.palettes {
    width: 42px;
    flex: none;
    display: flex;
    padding-left: 1px;
    gap: 1px;
}
.palette {
    width: 19px;
    flex: none;
    display: flex;
    flex-direction: column;
    align-items: center;
    padding: 6px 0 0 2px;
    border-left: 1px solid #f8f7f0;
}
.pal-grip {
    width: 12px;
    height: 1px;
    margin-bottom: 3px;
    background: repeating-linear-gradient(90deg, #8a8878 0 2px, transparent 2px 4px);
}
.pal-play {
    width: 14px;
    height: 14px;
    border-radius: 50%;
    border: 1px solid #a0a094;
    background: #f5f4ee;
    position: relative;
}
.pal-play::after {
    content: "";
    position: absolute;
    left: 4px;
    top: 2px;
    border-left: 6px solid #111;
    border-top: 4px solid transparent;
    border-bottom: 4px solid transparent;
}
.pal-up {
    width: 17px;
    height: 16px;
    margin-top: 4px;
    background: #f1efe4;
    display: flex;
    align-items: center;
    justify-content: center;
    opacity: 0.500;
}
.pal-up svg {
    width: 10px;
    height: 10px;
}
.swatch-none {
    width: 17px;
    height: 17px;
    border: 1px solid #111;
    background: #fff;
    margin-top: 1px;
}
.swatches {
    width: 17px;
    display: flex;
    flex-direction: column;
}
.swatches i {
    display: block;
    height: 17.030px;
    border-bottom: 1px solid rgba(60, 60, 60, 0.550);
}
.pal-down {
    width: 17px;
    height: 15px;
    background: #c5d5f8;
    border: 1px solid #eef2fb;
    display: flex;
    align-items: center;
    justify-content: center;
}
.pal-down svg {
    width: 10px;
    height: 10px;
}
.pal-first {
    width: 10px;
    height: 10px;
    margin-top: 4px;
}

/* status bar */
.statusbar {
    height: 44px;
    flex: none;
    display: flex;
    align-items: flex-end;
    padding: 0 0 6px 4px;
    position: relative;
    border-top: 1px solid #fff;
    font-size: 10.500px;
}
.coords {
    width: 115px;
    font-size: 11px;
}
.status-swatches {
    position: absolute;
    left: 947px;
    top: 3px;
    display: flex;
    flex-direction: column;
    gap: 2px;
}
.status-line {
    display: flex;
    align-items: center;
    gap: 4px;
}
.status-line svg {
    width: 17px;
    height: 17px;
}
.fill-none {
    width: 18px;
    height: 17px;
    border: 1px solid #111;
    background: #fff;
}
.fill-none svg {
    width: 16px;
    height: 15px;
}
.fill-black {
    width: 18px;
    height: 18px;
    background: #1d1d1b;
    border: 1px solid #777568;
}

/* windows taskbar */
.taskbar {
    height: 30px;
    flex: none;
    display: flex;
    align-items: center;
    background: linear-gradient(#3f8cf3 0, #245edb 3px, #2663e0 14px, #1f52c4 28px, #1a46a8 30px);
    color: #fff;
}
.start-btn {
    width: 97px;
    height: 30px;
    flex: none;
    display: flex;
    align-items: center;
    padding-left: 10px;
    gap: 5px;
    background: linear-gradient(#4c9a4c 0, #3c873c 4px, #3f8f3f 16px, #2f7a2f 30px);
    border-radius: 0 10px 10px 0;
    color: #fff;
    font-family: "Liberation Sans", Arial, sans-serif;
    font-stretch: normal;
    font-size: 18px;
    font-weight: bold;
    font-style: italic;
}
.start-btn svg {
    width: 18px;
    height: 18px;
}
.quick {
    width: 101px;
    flex: none;
    display: flex;
    align-items: center;
    gap: 5px;
    padding-left: 11px;
}
.quick svg {
    width: 18px;
    height: 18px;
}
.quick-more {
    color: #bcd0f4;
    font-size: 13px;
    margin-top: -8px;
    margin-left: 3px;
}
.task {
    width: 159px;
    height: 24px;
    flex: none;
    display: flex;
    align-items: center;
    gap: 4px;
    padding-left: 9px;
    margin-right: 1px;
    background: #3c80f3;
    border-radius: 3px;
    white-space: nowrap;
    font-size: 10.900px;
}
.task svg {
    width: 16px;
    height: 16px;
    flex: none;
}
.task-on {
    background: #1e52b7;
    width: 160px;
    padding-left: 9px;
}
.tray {
    margin-left: auto;
    width: 130px;
    height: 30px;
    flex: none;
    display: flex;
    align-items: center;
    gap: 3px;
    padding-left: 10px;
    background: linear-gradient(#18a0f0 0, #0f8ae4 14px, #0d75d4 30px);
    position: relative;
}
.tray svg {
    width: 16px;
    height: 16px;
    flex: none;
}
.tray-chev {
    position: absolute;
    left: -8px;
    top: 7px;
    width: 17px;
    height: 17px;
    border-radius: 50%;
    background: #3a8cf0;
    border: 1px solid #a8d0f8;
    display: flex;
    align-items: center;
    justify-content: center;
}
.tray-chev svg {
    width: 10px;
    height: 10px;
}
.clock {
    margin-left: 7px;
    white-space: nowrap;
    font-size: 10.500px;
}
```
